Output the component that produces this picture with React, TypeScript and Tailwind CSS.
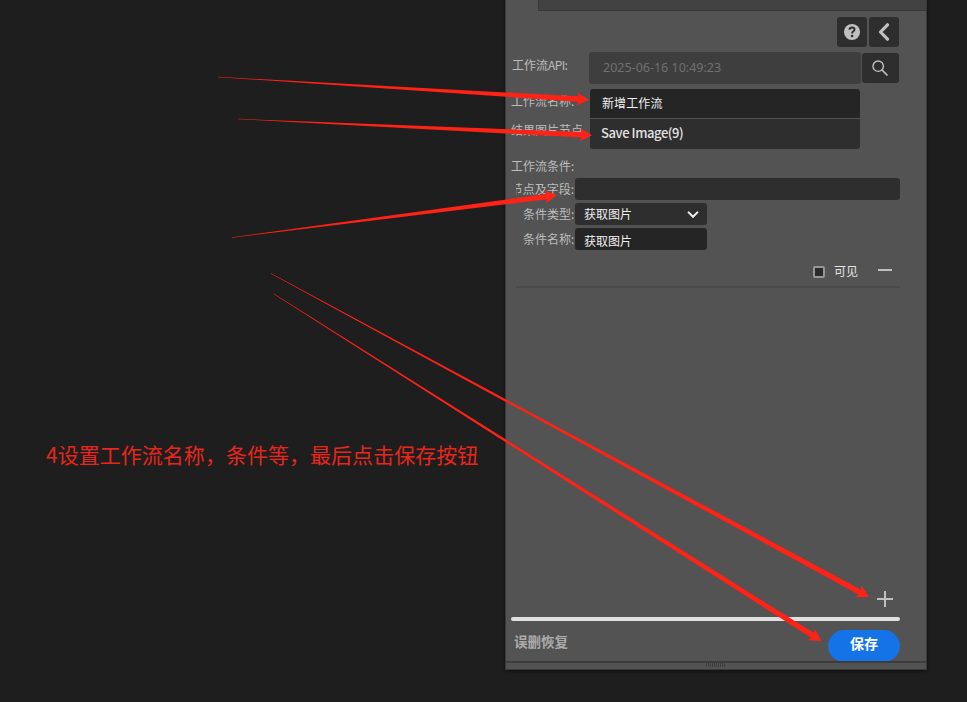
import type { ReactNode } from "react";

type Point = [number, number];

// A tapered arrow: hair-thin at the tail, thick near the head.
function arrowPoints([x1, y1]: Point, [x2, y2]: Point) {
  const len = Math.hypot(x2 - x1, y2 - y1);
  const ux = (x2 - x1) / len;
  const uy = (y2 - y1) / len;
  const at = (back: number, side: number) =>
    `${x2 - ux * back - uy * side},${y2 - uy * back + ux * side}`;
  return [
    at(len, 0.15),
    at(10.5, 2.7),
    at(12, 6.6),
    at(0, 0),
    at(12, -6.6),
    at(10.5, -2.7),
    at(len, -0.15),
  ].join(" ");
}

const arrows: { from: Point; to: Point }[] = [
  { from: [218, 77], to: [589, 99.7] },
  { from: [238, 119], to: [592, 135.3] },
  { from: [232, 237.5], to: [557, 195.3] },
  { from: [271, 273.5], to: [869, 597] },
  { from: [274, 294], to: [821.5, 641] },
];

function Label({ className, children }: { className: string; children: ReactNode }) {
  return (
    <div className={`shrink-0 whitespace-nowrap text-[12px] leading-[18px] text-[#bcbcbc] ${className}`}>
      {children}
    </div>
  );
}

function IconButton({ className, children }: { className: string; children: ReactNode }) {
  return (
    <button className={`flex h-[30px] items-center justify-center rounded-[3px] bg-[#2e2e2e] ${className}`}>
      {children}
    </button>
  );
}

export default function App() {
  return (
    <div className="relative flex h-[702px] w-[967px] overflow-hidden bg-[#1e1e1e] font-['Noto_Sans_CJK_SC','Noto_Sans',sans-serif]">
      <div className="w-[505px] shrink-0 pl-[46px] pt-[439px]">
        <p className="whitespace-nowrap text-[21px] font-normal leading-[31px] tracking-[0.03px] text-[#e8261b]">
          4设置工作流名称，条件等，最后点击保存按钮
        </p>
      </div>

      <div className="flex h-[670px] w-[422px] shrink-0 flex-col border-x border-b border-[#393939] bg-[#535353] shadow-[0_1px_4px_rgba(0,0,0,0.5)]">
        <div className="ml-[32px] h-[11px] shrink-0 border-b border-l border-[#383838] bg-[#424242]" />

        <div className="mr-[27px] mt-[6px] flex shrink-0 justify-end gap-[2px]">
          <IconButton className="w-[30px]">
            <svg width="16" height="16" viewBox="0 0 16 16">
              <circle cx="8" cy="8" r="8" fill="#c0c0c0" />
              <path d="M5.5 5.7C5.6 4.2 6.6 3.4 8 3.4c1.5 0 2.5.9 2.5 2.1 0 1.7-2.3 1.7-2.3 3.5v.4" fill="none" stroke="#2e2e2e" strokeWidth="2" />
              <circle cx="8.1" cy="12" r="1.3" fill="#2e2e2e" />
            </svg>
          </IconButton>
          <IconButton className="w-[30px]">
            <svg width="12" height="18" viewBox="0 0 12 18">
              <path d="M9.5 1.8L2.5 9l7 7.2" fill="none" stroke="#c0c0c0" strokeWidth="3.2" strokeLinecap="round" strokeLinejoin="round" />
            </svg>
          </IconButton>
        </div>

        <div className="mt-[5px] flex h-[32px] shrink-0 pl-[6px]">
          <Label className="w-[77px] pt-[4px]">
            工作流<span className="tracking-[-0.6px]">API:</span>
          </Label>
          <div className="flex w-[272px] items-center rounded-[3px] bg-[#3e3e3e] pl-[14px] font-['Noto_Sans'] text-[12.5px] text-[#707070]">
            2025-06-16 10:49:23
          </div>
          <IconButton className="ml-px mt-px w-[37px] pr-[2px]">
            <svg width="16" height="16" viewBox="0 0 16 16" fill="none" stroke="#c0c0c0">
              <circle cx="6.2" cy="6.2" r="5.2" strokeWidth="1.4" />
              <path d="M10 10l5 5" strokeWidth="1.7" strokeLinecap="round" />
            </svg>
          </IconButton>
        </div>

        <div className="mt-[5px] flex h-[29px] shrink-0 pl-[5px]">
          <Label className="w-[79px] pt-[3px]">工作流名称:</Label>
          <div className="flex w-[270px] items-center rounded-t-[3px] bg-[#252525] pb-px pl-[12px] text-[12px] text-[#f0f0f0]">
            <span className="tracking-[0.1px]">新增工作流</span>
          </div>
        </div>
        <div className="mt-px flex h-[30px] shrink-0 pl-[5px]">
          <Label className="w-[71px] overflow-hidden pt-[2px]">结果图片节点:</Label>
          <div className="ml-[8px] flex w-[270px] items-center rounded-b-[3px] bg-[#2e2e2e] pb-[2px] pl-[11px] text-[13px] font-medium tracking-[-0.42px] text-[#e2e2e2]">
            Save Image(9)
          </div>
        </div>

        <Label className="ml-[5px] mt-[8px] h-[18px]">工作流条件:</Label>
        <div className="mt-[3px] flex h-[22px] shrink-0 pl-[10px]">
          <Label className="flex w-[58px] justify-end overflow-hidden pt-[2px]">节点及字段:</Label>
          <div className="ml-px w-[325px] rounded-[3px] bg-[#2e2e2e]" />
        </div>
        <div className="mt-[3px] flex h-[22px] shrink-0 pl-[9px]">
          <Label className="w-[60px] pl-[8px] pt-[2px]">条件类型:</Label>
          <div className="flex w-[132px] items-center justify-between rounded-[3px] bg-[#2e2e2e] pl-[9px] pr-[8px] text-[12px] text-[#f0f0f0]">
            获取图片
            <svg width="12" height="8" viewBox="0 0 12 8" className="mt-[2px]">
              <path d="M1.6 1.4L6 5.8l4.4-4.4" fill="none" stroke="#eeeeee" strokeWidth="2" strokeLinecap="round" />
            </svg>
          </div>
        </div>
        <div className="mt-[3px] flex h-[22px] shrink-0 pl-[9px]">
          <Label className="w-[60px] pl-[8px] pt-[2px]">条件名称:</Label>
          <div className="flex w-[132px] items-center rounded-[3px] bg-[#252525] pl-[9px] pt-[3px] text-[12px] text-[#f0f0f0]">
            获取图片
          </div>
        </div>

        <div className="mr-[34px] mt-[12px] flex h-[18px] shrink-0 items-center justify-end text-[12px] text-[#e4e4e4]">
          <span className="mr-[9px] mt-[2px] h-[12px] w-[12px] rounded-[2px] border-2 border-[#969696] bg-[#2b2b2b]" />
          可见
          <span className="mb-[2px] ml-[20px] h-[2px] w-[14px] bg-[#c0c0c0]" />
        </div>
        <div className="ml-[10px] mr-[26px] mt-[6px] h-[2px] shrink-0 bg-[#4a4a4a]" />

        <div className="mr-[33px] mt-[303px] flex shrink-0 justify-end">
          <svg width="16" height="16" viewBox="0 0 16 16">
            <path d="M8 0v16M0 8h16" stroke="#c0c0c0" strokeWidth="2" />
          </svg>
        </div>
        <div className="ml-[5px] mr-[26px] mt-[10px] h-[4px] shrink-0 rounded-full bg-[#e1e0e1]" />

        <div className="flex h-[40px] shrink-0 justify-between overflow-hidden pl-[8px] pr-[26px]">
          <span className="pt-[10px] text-[13.5px] font-bold leading-[20px] text-[#ababab]">误删恢复</span>
          <button className="mt-[9px] h-[32px] w-[72px] rounded-full bg-[#1473e6] pb-[5px] text-[14px] font-bold leading-[27px] text-white">
            保存
          </button>
        </div>
        <div className="h-[2px] shrink-0 bg-[#3c3c3c]" />
        <div className="flex h-[6px] items-start gap-px pl-[200px]">
          {Array.from({ length: 10 }, (_, i) => (
            <span key={i} className="h-[4px] w-px bg-[#3e3e3e]" />
          ))}
        </div>
      </div>

      <svg className="pointer-events-none absolute inset-0" width="967" height="702" viewBox="0 0 967 702">
        {arrows.map(({ from, to }) => (
          <polygon key={from.join()} points={arrowPoints(from, to)} fill="#ff2216" />
        ))}
      </svg>
    </div>
  );
}
